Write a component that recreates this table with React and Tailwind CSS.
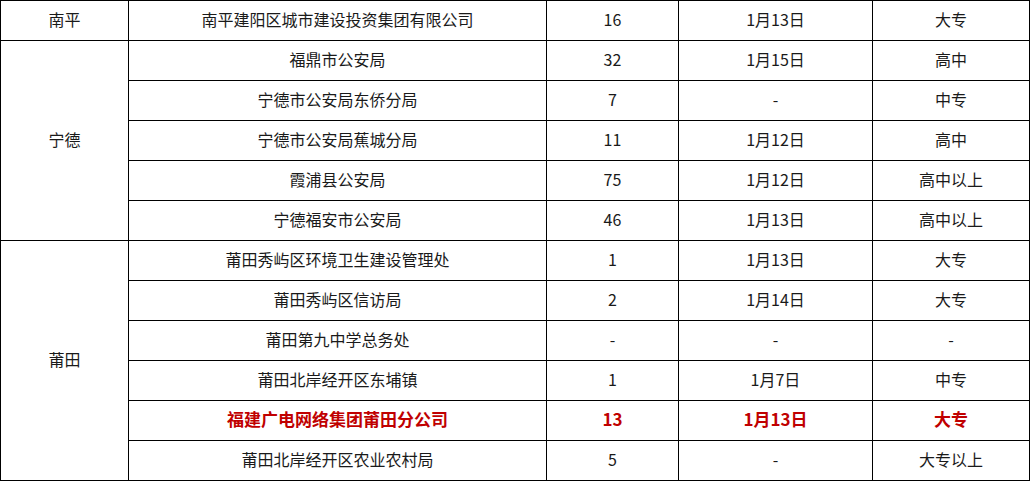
import React from "react";

const rows = [
  { city: "南平", span: 1, name: "南平建阳区城市建设投资集团有限公司", n: "16", d: "1月13日", e: "大专" },
  { city: "宁德", span: 5, name: "福鼎市公安局", n: "32", d: "1月15日", e: "高中" },
  { name: "宁德市公安局东侨分局", n: "7", d: "-", e: "中专" },
  { name: "宁德市公安局蕉城分局", n: "11", d: "1月12日", e: "高中" },
  { name: "霞浦县公安局", n: "75", d: "1月12日", e: "高中以上" },
  { name: "宁德福安市公安局", n: "46", d: "1月13日", e: "高中以上" },
  { city: "莆田", span: 6, name: "莆田秀屿区环境卫生建设管理处", n: "1", d: "1月13日", e: "大专" },
  { name: "莆田秀屿区信访局", n: "2", d: "1月14日", e: "大专" },
  { name: "莆田第九中学总务处", n: "-", d: "-", e: "-" },
  { name: "莆田北岸经开区东埔镇", n: "1", d: "1月7日", e: "中专" },
  { name: "福建广电网络集团莆田分公司", n: "13", d: "1月13日", e: "大专", red: true },
  { name: "莆田北岸经开区农业农村局", n: "5", d: "-", e: "大专以上" },
];

export default function App() {
  const cell = "border border-black text-center align-middle p-0 pb-[3px]";
  return (
    <div className="w-[1031px] h-[482px] overflow-hidden bg-white">
      <table
        className="border-collapse table-fixed w-[1029px] text-[16px] leading-[16px] text-[#1a1a1a]"
        style={{ fontFamily: '"Noto Sans CJK SC", "Liberation Sans", sans-serif' }}
      >
        <colgroup>
          <col className="w-[128px]" />
          <col className="w-[418px]" />
          <col className="w-[132px]" />
          <col className="w-[194px]" />
          <col className="w-[157px]" />
        </colgroup>
        <tbody>
          {rows.map((r, i) => {
            const t = r.red ? "text-[#c00000] font-bold text-[17px]" : "";
            return (
              <tr key={i} className="h-[40px]">
                {r.city && (
                  <td rowSpan={r.span} className={cell}>
                    {r.city}
                  </td>
                )}
                <td className={`${cell} ${t}`}>{r.name}</td>
                <td className={`${cell} ${t}`}>{r.n}</td>
                <td className={`${cell} ${t}`}>{r.d}</td>
                <td className={`${cell} ${t}`}>{r.e}</td>
              </tr>
            );
          })}
        </tbody>
      </table>
    </div>
  );
}
